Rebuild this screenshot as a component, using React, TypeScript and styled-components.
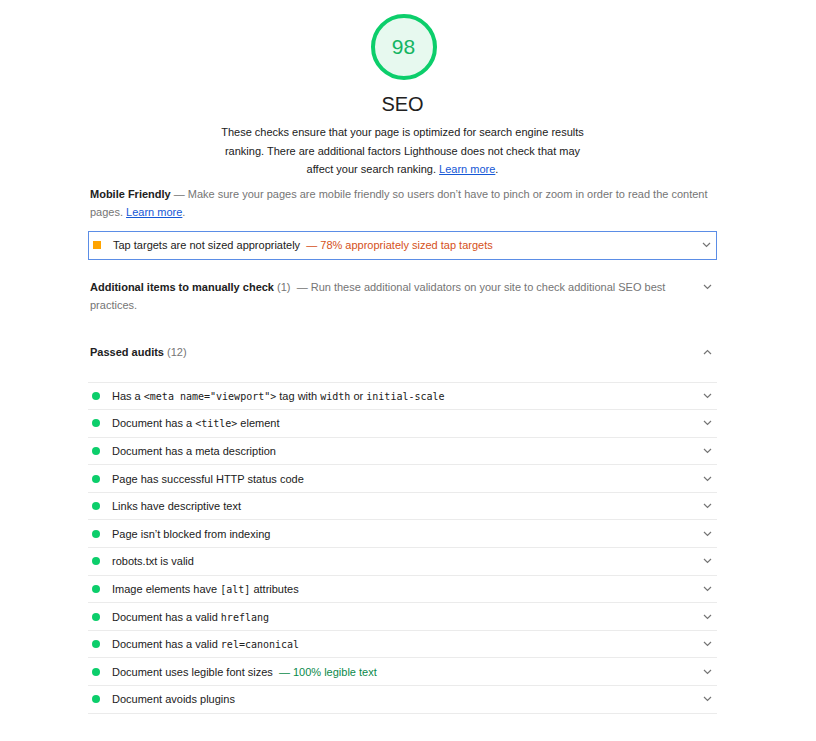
import React from 'react';
import styled, { createGlobalStyle } from 'styled-components';

const GlobalStyle = createGlobalStyle`
    body {
        margin: 0;
        background: #fff;
        font-family: "Liberation Sans", Arial, sans-serif;
        color: #212121;
    }
`;

const Page = styled.div`
    width: 629px;
    margin-left: 88px;
    padding-top: 14px;
    padding-bottom: 20px;
`;

const Header = styled.div`
    display: flex;
    flex-direction: column;
    align-items: center;
`;

const Gauge = styled.div`
    width: 58px;
    height: 58px;
    border: 4px solid #0cce6b;
    border-radius: 50%;
    background: #e7f9ef;
    display: flex;
    align-items: center;
    justify-content: center;
    font-size: 21px;
    color: #14b562;
    margin-left: 2px;
`;

const Title = styled.div`
    font-size: 20px;
    color: #212121;
    margin-top: 12px;
    line-height: 24px;
`;

const Description = styled.p`
    margin: 7px 0 0;
    width: 372px;
    text-align: center;
    font-size: 11px;
    line-height: 18.5px;
    color: #212121;
`;

const Link = styled.a`
    color: #1558d6;
    text-decoration: underline;
`;

const Group = styled.div<{ $top: number }>`
    margin-top: ${p => p.$top}px;
    font-size: 11px;
    line-height: 18px;
    color: #757575;
    display: flex;
    align-items: flex-start;
    padding-left: 2px;
`;

const GroupText = styled.div`
    flex: 1;
`;

const GroupTitle = styled.span`
    font-weight: bold;
    color: #212121;
`;

const Count = styled.span`
    color: #757575;
`;

const ChevronWrap = styled.span`
    width: 20px;
    display: flex;
    justify-content: center;
    align-items: center;
    flex-shrink: 0;
    color: #757575;
    height: 18px;
`;

const FailBox = styled.div`
    margin-top: 10px;
    height: 27px;
    border: 1px solid #5b8de6;
    display: flex;
    align-items: center;
    font-size: 11px;
`;

const Orange = styled.span`
    width: 8px;
    height: 8px;
    background: #ffa400;
    margin: 0 12px 0 4px;
`;

const Rows = styled.div`
    margin-top: 21px;
    border-top: 1px solid #ebebeb;
`;

const Row = styled.div`
    height: 26.6px;
    border-bottom: 1px solid #ebebeb;
    display: flex;
    align-items: center;
    font-size: 11px;
`;

const Dot = styled.span`
    width: 8px;
    height: 8px;
    border-radius: 50%;
    background: #0cce6b;
    margin: 0 12px 0 4px;
`;

const Label = styled.span`
    flex: 1;
    color: #212121;
`;

const Display = styled.span<{ $tone: 'pass' | 'average' }>`
    color: ${p => (p.$tone === 'pass' ? '#0b8a4b' : '#d5511a')};
`;

const Code = styled.code`
    font-family: "DejaVu Sans Mono", "Liberation Mono", monospace;
    font-size: 10px;
`;

const Chevron = ({ up }: { up?: boolean }) => (
    <ChevronWrap>
        <svg width="9" height="6" viewBox="0 0 9 6">
            <path
                d={up ? 'M1 5 L4.5 1.5 L8 5' : 'M1 1 L4.5 4.5 L8 1'}
                fill="none"
                stroke="#757575"
                strokeWidth="1.2"
            />
        </svg>
    </ChevronWrap>
);

type Audit = { label: React.ReactNode; display?: string };

const passed: Audit[] = [
    { label: <>Has a <Code>&lt;meta name="viewport"&gt;</Code> tag with <Code>width</Code> or <Code>initial-scale</Code></> },
    { label: <>Document has a <Code>&lt;title&gt;</Code> element</> },
    { label: 'Document has a meta description' },
    { label: 'Page has successful HTTP status code' },
    { label: 'Links have descriptive text' },
    { label: 'Page isn’t blocked from indexing' },
    { label: 'robots.txt is valid' },
    { label: <>Image elements have <Code>[alt]</Code> attributes</> },
    { label: <>Document has a valid <Code>hreflang</Code></> },
    { label: <>Document has a valid <Code>rel=canonical</Code></> },
    { label: 'Document uses legible font sizes', display: '100% legible text' },
    { label: 'Document avoids plugins' },
];

export default function App() {
    return (
        <>
            <GlobalStyle />
            <Page>
                <Header>
                    <Gauge>98</Gauge>
                    <Title>SEO</Title>
                    <Description>
                        These checks ensure that your page is optimized for search engine results
                        ranking. There are additional factors Lighthouse does not check that may
                        affect your search ranking. <Link href="#">Learn more</Link>.
                    </Description>
                </Header>

                <Group $top={6}>
                    <GroupText>
                        <GroupTitle>Mobile Friendly</GroupTitle> — Make sure your pages are mobile
                        friendly so users don’t have to pinch or zoom in order to read the content
                        pages. <Link href="#">Learn more</Link>.
                    </GroupText>
                </Group>

                <FailBox>
                    <Orange />
                    <Label>
                        Tap targets are not sized appropriately
                        <Display $tone="average">&nbsp;&nbsp;— 78% appropriately sized tap targets</Display>
                    </Label>
                    <Chevron />
                </FailBox>

                <Group $top={18}>
                    <GroupText>
                        <GroupTitle>Additional items to manually check</GroupTitle>{' '}
                        <Count>(1)</Count>&nbsp; — Run these additional validators on your site to
                        check additional SEO best practices.
                    </GroupText>
                    <Chevron />
                </Group>

                <Group $top={29}>
                    <GroupText>
                        <GroupTitle>Passed audits</GroupTitle> <Count>(12)</Count>
                    </GroupText>
                    <Chevron up />
                </Group>

                <Rows>
                    {passed.map((a, i) => (
                        <Row key={i}>
                            <Dot />
                            <Label>
                                {a.label}
                                {a.display && (
                                    <Display $tone="pass">&nbsp;&nbsp;— {a.display}</Display>
                                )}
                            </Label>
                            <Chevron />
                        </Row>
                    ))}
                </Rows>
            </Page>
        </>
    );
}
